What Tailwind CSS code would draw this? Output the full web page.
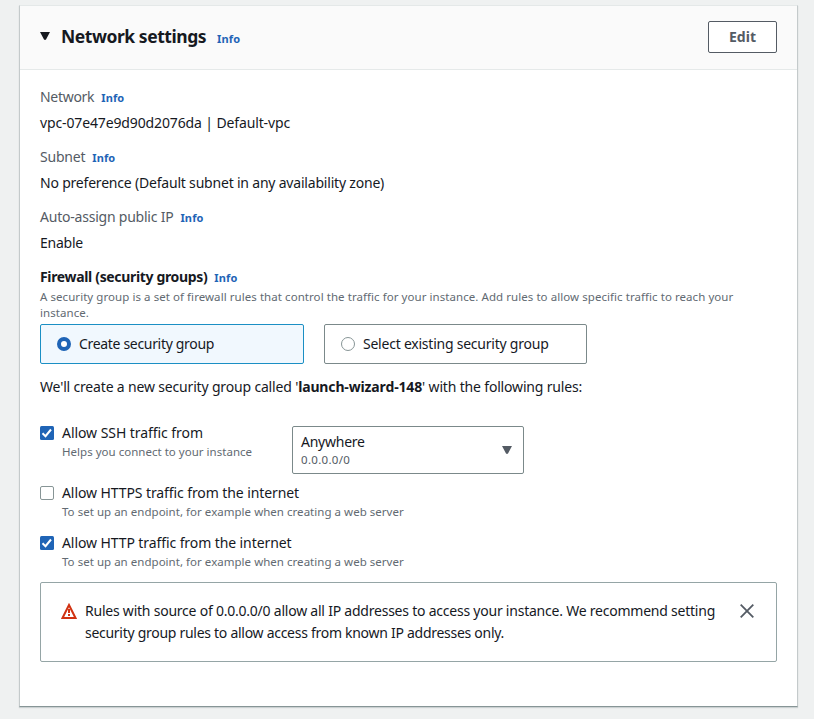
<!DOCTYPE html>
<html lang="en">
<head>
<meta charset="utf-8">
<title>Network settings</title>
<script src="https://cdn.jsdelivr.net/npm/@tailwindcss/browser@4"></script>
</head>
<body class="bg-[#eff1f1] h-[719px] overflow-hidden pt-[5px] pl-[19px] font-['Noto_Sans',sans-serif] text-[14px] leading-[22px] text-[#16191f] whitespace-nowrap">
<section class="w-[779px] h-[702px] bg-white border border-t-[#e4e8e8] border-x-[#c4cacb] border-b-[#879596] shadow-[0_1px_1px_rgba(0,28,36,0.15)]">
  <header class="h-[64px] bg-[#fafafa] border-b border-[#e5e9e9] flex items-center pl-5 pr-5">
    <svg class="w-[10px] h-[8px] mb-[3px]" viewBox="0 0 10 8"><path d="M0 0H10L6 7.5Q5 8.3 4 7.5Z" fill="#16191f"/></svg>
    <h2 class="ml-[11px] mb-[3px] text-[17.5px] font-bold tracking-[-0.45px]">Network settings</h2>
    <a class="ml-[11px] mt-[3px] text-[11px] font-bold tracking-[0.12px] text-[#1f64b6]">Info</a>
    <button class="ml-auto mb-px w-[69px] h-[32px] border border-[#545b64] rounded-[2px] bg-white font-bold text-[#545b64]">Edit</button>
  </header>
  <div class="px-5 pt-4">
    <dl class="flex flex-col gap-3">
      <div>
        <dt class="h-[26px] flex gap-[7px] text-[#545b64]"><span class="tracking-[-0.3px]">Network</span><a class="pt-px text-[11px] font-bold tracking-[0.12px] text-[#1f64b6]">Info</a></dt>
        <dd class="tracking-[-0.13px]">vpc-07e47e9d90d2076da | Default-vpc</dd>
      </div>
      <div>
        <dt class="h-[26px] flex gap-[7px] text-[#545b64]"><span class="tracking-[-0.22px]">Subnet</span><a class="pt-px text-[11px] font-bold tracking-[0.12px] text-[#1f64b6]">Info</a></dt>
        <dd class="tracking-[-0.2px]">No preference (Default subnet in any availability zone)</dd>
      </div>
      <div>
        <dt class="h-[26px] flex gap-[7px] text-[#545b64]"><span class="tracking-[-0.22px]">Auto-assign public IP</span><a class="pt-px text-[11px] font-bold tracking-[0.12px] text-[#1f64b6]">Info</a></dt>
        <dd class="tracking-[-0.25px]">Enable</dd>
      </div>
    </dl>
    <div class="mt-3 flex gap-[7px]"><span class="font-bold tracking-[-0.34px]">Firewall (security groups)</span><a class="pt-px text-[11px] font-bold tracking-[0.12px] text-[#1f64b6]">Info</a></div>
    <p class="text-[11.5px] leading-4 tracking-[0.06px] text-[#626a72]">A security group is a set of firewall rules that control the traffic for your instance. Add rules to allow specific traffic to reach your<br>instance.</p>
    <div class="mt-[3px] flex gap-5">
      <div class="w-[264px] h-[40px] flex items-center pl-4 border border-[#1b8fc4] bg-[#f1f8fe] rounded-[2px]">
        <span class="size-[14px] rounded-full border-4 border-[#1f64b6] bg-white"></span>
        <span class="ml-2 tracking-[-0.32px]">Create security group</span>
      </div>
      <div class="w-[263px] h-[40px] flex items-center pl-4 border border-[#7b898a] rounded-[2px]">
        <span class="size-[14px] rounded-full border border-[#879596] bg-white"></span>
        <span class="ml-2 tracking-[-0.23px]">Select existing security group</span>
      </div>
    </div>
    <p class="mt-3 tracking-[-0.17px]">We'll create a new security group called '<b class="tracking-[-0.14px]">launch-wizard-148</b>' with the following rules:</p>
    <div class="mt-6 h-[60px] flex">
      <div class="w-[252px] flex gap-2">
        <svg class="size-[14px] mt-1" viewBox="0 0 14 14"><rect width="14" height="14" rx="1.5" fill="#1f64b6"/><path d="M2.5 7.2 5.5 10.2 11 3.5" fill="none" stroke="#fff" stroke-width="2"/></svg>
        <div><div class="tracking-[-0.06px]">Allow SSH traffic from</div><div class="text-[11.5px] leading-4 tracking-[0.02px] text-[#626a72]">Helps you connect to your instance</div></div>
      </div>
      <div class="mt-1 w-[232px] h-[48px] border border-[#7b898a] rounded-[2px] flex items-center justify-between pl-2 pr-[11px]">
        <div><div class="h-[21px] -mt-px tracking-[-0.25px]">Anywhere</div><div class="text-[11.5px] leading-4 tracking-[0.3px] text-[#545b64]">0.0.0.0/0</div></div>
        <svg class="w-[10px] h-[8px]" viewBox="0 0 10 8"><path d="M0 0H10L6 7.5Q5 8.3 4 7.5Z" fill="#545b64"/></svg>
      </div>
    </div>
    <div class="h-[50px] flex gap-2">
      <span class="size-[14px] mt-1 border border-[#879596] rounded-[2px]"></span>
      <div><div class="tracking-[-0.09px]">Allow HTTPS traffic from the internet</div><div class="text-[11.5px] leading-4 tracking-[0.03px] text-[#626a72]">To set up an endpoint, for example when creating a web server</div></div>
    </div>
    <div class="h-[50px] flex gap-2">
      <svg class="size-[14px] mt-1" viewBox="0 0 14 14"><rect width="14" height="14" rx="1.5" fill="#1f64b6"/><path d="M2.5 7.2 5.5 10.2 11 3.5" fill="none" stroke="#fff" stroke-width="2"/></svg>
      <div><div class="tracking-[-0.09px]">Allow HTTP traffic from the internet</div><div class="text-[11.5px] leading-4 tracking-[0.03px] text-[#626a72]">To set up an endpoint, for example when creating a web server</div></div>
    </div>
    <div class="w-[737px] h-[80px] border border-[#95a5a6] rounded-[2px] flex pl-5 pt-[17px]">
      <svg class="size-4 mt-[3px]" viewBox="0 0 16 16" fill="none" stroke="#d13212" stroke-width="2"><path d="M8 2 14.5 15H1.5Z"/><path d="M8 6V10M8 11V13"/></svg>
      <div class="ml-2"><p class="tracking-[-0.227px]">Rules with source of 0.0.0.0/0 allow all IP addresses to access your instance. We recommend setting</p><p class="tracking-[-0.28px]">security group rules to allow access from known IP addresses only.</p></div>
      <svg class="ml-auto mr-[22px] mt-[4px] size-[14px]" viewBox="0 0 14 14"><path d="M.7 .7 13.3 13.3M13.3 .7 .7 13.3" stroke="#545b64" stroke-width="1.8"/></svg>
    </div>
  </div>
</section>
</body>
</html>
